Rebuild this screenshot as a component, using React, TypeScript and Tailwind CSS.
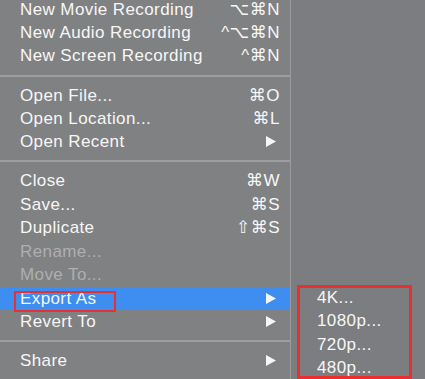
import React from "react";

const Arrow = () => (
  <svg width="10" height="11" viewBox="0 0 10 11" className="block">
    <polygon points="0,0 10,5.5 0,11" fill="#f6f6f6" />
  </svg>
);

type Item = { label: string; sc?: string; arrow?: boolean; disabled?: boolean; active?: boolean };

const Row = ({ item, h }: { item: Item; h: string }) => (
  <div
    className={`flex items-center justify-between pl-[20px] ${item.arrow ? "pr-[14px]" : "pr-[10px]"} ${h} ${
      item.active ? "bg-[#3d8ef0]" : ""
    }`}
  >
    <span className={`tracking-[0.4px] ${item.disabled ? "text-[#aeafb0]" : "text-[#f7f7f7]"}`}>{item.label}</span>
    {item.sc && <span className="text-[#f7f7f7] tracking-[0.5px]">{item.sc}</span>}
    {item.arrow && <Arrow />}
  </div>
);

const Sep = ({ h }: { h: string }) => (
  <div className={`flex items-center ${h}`}>
    <div className="h-[2px] w-full bg-[#9d9e9f]" />
  </div>
);

export default function App() {
  const g1: Item[] = [
    { label: "New Movie Recording", sc: "⌥⌘N" },
    { label: "New Audio Recording", sc: "^⌥⌘N" },
    { label: "New Screen Recording", sc: "^⌘N" },
  ];
  const g2: Item[] = [
    { label: "Open File...", sc: "⌘O" },
    { label: "Open Location...", sc: "⌘L" },
    { label: "Open Recent", arrow: true },
  ];
  const g3: Item[] = [
    { label: "Close", sc: "⌘W" },
    { label: "Save...", sc: "⌘S" },
    { label: "Duplicate", sc: "⇧⌘S" },
    { label: "Rename...", disabled: true },
    { label: "Move To...", disabled: true },
    { label: "Export As", arrow: true, active: true },
    { label: "Revert To", arrow: true },
  ];
  return (
    <div
      className="relative flex w-[425px] h-[379px] overflow-hidden bg-[#7b7d80] text-[17px] leading-none"
      style={{ fontFamily: '"Liberation Sans", "DejaVu Sans", sans-serif' }}
    >
      <div className="flex flex-col w-[291px] shrink-0 bg-[#808182] border-r border-[#9a9b9c] -mt-[2px]">
        {g1.map((it) => (
          <Row key={it.label} item={it} h="h-[23px]" />
        ))}
        <Sep h="h-[17px]" />
        {g2.map((it) => (
          <Row key={it.label} item={it} h="h-[23px]" />
        ))}
        <Sep h="h-[16px]" />
        {g3.map((it) => (
          <Row key={it.label} item={it} h="h-[23.5px]" />
        ))}
        <Sep h="h-[15px]" />
        <Row item={{ label: "Share", arrow: true }} h="h-[23.5px]" />
      </div>
      <div className="flex flex-col pt-[286px] pl-[26px] text-[#f7f7f7] tracking-[0.4px]">
        {["4K...", "1080p...", "720p...", "480p..."].map((t) => (
          <div key={t} className="h-[23.3px] flex items-center">
            {t}
          </div>
        ))}
      </div>
      <div className="absolute left-[14px] top-[291px] w-[102px] h-[21px] border-2 border-[#ea2f2f]" />
      <div className="absolute left-[297px] top-[285px] w-[115px] h-[94px] border-[3px] border-[#ea2f2f]" />
    </div>
  );
}
